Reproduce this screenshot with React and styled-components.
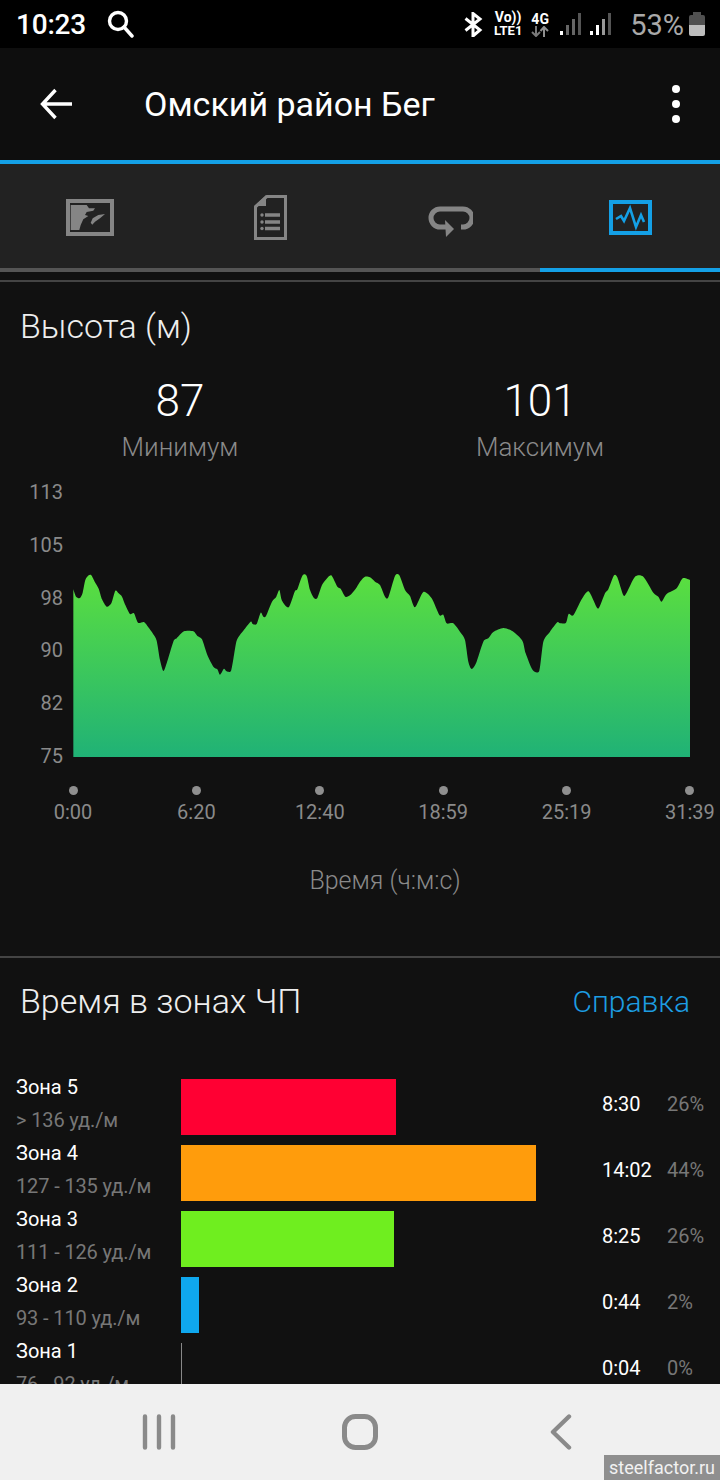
import React from "react";
import styled, { createGlobalStyle } from "styled-components";

const GlobalStyle = createGlobalStyle`
  html, body {
    margin: 0;
    padding: 0;
    background: #111;
  }
  * {
    box-sizing: border-box;
  }
`;

const Screen = styled.div`
  position: relative;
  width: 720px;
  height: 1480px;
  display: flex;
  flex-direction: column;
  overflow: hidden;
  background: #111;
  font-family: Roboto, "Noto Sans", sans-serif;
  color: #fff;
`;

const StatusBar = styled.div`
  flex: none;
  height: 48px;
  background: #000;
  display: flex;
  align-items: center;
  padding: 0 15px 0 16px;
`;

const Clock = styled.div`
  font-size: 28px;
  font-weight: 500;
  letter-spacing: -0.2px;
  width: 91px;
`;

const StatusRight = styled.div`
  margin-left: auto;
  display: flex;
  align-items: center;
`;

const NetBlock = styled.div`
  display: flex;
  flex-direction: column;
  align-items: center;
  font-weight: 700;
  margin-left: ${(p) => p.$gap}px;
  width: ${(p) => p.$width}px;
`;

const NetLine = styled.span`
  font-size: ${(p) => p.$size}px;
  line-height: ${(p) => p.$line}px;
  white-space: nowrap;
`;

const Signal = styled.div`
  display: flex;
  align-items: flex-end;
  gap: 3px;
  height: 22px;
  margin-left: ${(p) => p.$gap}px;
`;

const SignalBar = styled.i`
  display: block;
  width: 3px;
  height: ${(p) => p.$h}px;
  background: ${(p) => p.$c};
`;

const BatteryText = styled.div`
  font-size: 29px;
  color: #a9a9a9;
  margin: 2px 0 0 19px;
`;

const Battery = styled.div`
  position: relative;
  width: 16px;
  height: 21px;
  margin: 3px 0 0 5px;
  border-radius: 2px;
  background: linear-gradient(#505050 0 48%, #bdbdbd 48%);

  &::before {
    content: "";
    position: absolute;
    top: -3px;
    left: 4px;
    width: 8px;
    height: 3px;
    background: #505050;
  }
`;

const AppBar = styled.div`
  flex: none;
  height: 112px;
  background: #0e0e0e;
  display: flex;
  align-items: center;
  padding: 0 40px 0 40px;
`;

const Title = styled.div`
  font-size: 34px;
  margin-left: 72px;
  flex: 1;
`;

const Dots = styled.div`
  display: flex;
  flex-direction: column;
  gap: 7px;
`;

const Dot = styled.i`
  display: block;
  width: 8px;
  height: 8px;
  border-radius: 50%;
  background: #fff;
`;

const Tabs = styled.div`
  flex: none;
  display: grid;
  grid-template-columns: repeat(4, 1fr);
  border-top: 4px solid #14a0e6;
  background: #222;
`;

const Tab = styled.div`
  height: 108px;
  display: flex;
  align-items: center;
  justify-content: center;
  padding-top: 2px;
  border-bottom: 4px solid ${(p) => (p.$active ? "#14a0e6" : "#555")};
`;

const LoopIcon = styled.svg`
  margin-top: 8px;
`;

const Content = styled.div`
  flex: 1;
  min-height: 0;
  overflow: hidden;
`;

const Section = styled.section`
  border-top: 2px solid #444;
  margin-top: ${(p) => p.$top}px;
`;

const SectionHead = styled.div`
  display: flex;
  justify-content: space-between;
  align-items: center;
  padding: 0 30px 0 20px;
  height: ${(p) => p.$height}px;
`;

const SectionTitle = styled.div`
  font-size: 34px;
  color: #eee;
  font-weight: 300;
`;

const HelpLink = styled.a`
  font-size: 30px;
  font-weight: 300;
  color: #1d9de2;
`;

const Stats = styled.div`
  display: grid;
  grid-template-columns: 1fr 1fr;
  margin-top: 4px;
`;

const Stat = styled.div`
  text-align: center;
`;

const StatValue = styled.div`
  font-size: 44px;
  font-weight: 300;
  line-height: 54px;
`;

const StatLabel = styled.div`
  font-size: 26px;
  font-weight: 300;
  line-height: 38px;
  color: #8a8a8a;
`;

const ChartRow = styled.div`
  display: flex;
  margin-top: 14px;
  height: 288px;
`;

const YAxis = styled.div`
  width: 63px;
  display: flex;
  flex-direction: column;
  justify-content: space-between;
  align-items: flex-end;
`;

const AxisText = styled.span`
  font-size: 20px;
  line-height: 24px;
  color: #8a8a8a;
`;

const Plot = styled.div`
  margin: 90px 0 0 10px;
  width: 617px;
  height: 187px;
`;

const XAxis = styled.div`
  display: flex;
  justify-content: space-between;
  margin: 18px 30px 0 73px;
`;

const Tick = styled.div`
  width: 0;
  display: flex;
  flex-direction: column;
  align-items: center;
  gap: 5px;
  white-space: nowrap;
`;

const TickDot = styled.i`
  display: block;
  flex: none;
  width: 9px;
  height: 9px;
  border-radius: 50%;
  background: #8f8f8f;
`;

const AxisTitle = styled.div`
  text-align: center;
  font-size: 25px;
  font-weight: 300;
  color: #8a8a8a;
  line-height: 30px;
  margin: 42px 0 60px 50px;
`;

const Zones = styled.div`
  margin-top: 29px;
`;

const ZoneRow = styled.div`
  display: grid;
  grid-template-columns: 165px 421px 65px 1fr;
  height: 66px;
  padding-left: 16px;
`;

const ZoneName = styled.div`
  font-size: 20px;
  line-height: 28px;
  color: #fff;
`;

const ZoneRange = styled.div`
  font-size: 20px;
  line-height: 28px;
  margin-top: 5px;
  letter-spacing: -0.13px;
  color: #777;
  white-space: nowrap;
`;

const ZoneBar = styled.div`
  margin-top: 6px;
  height: 56px;
  width: ${(p) => p.$width}px;
  background: ${(p) => p.$color};
`;

const ZoneTime = styled.div`
  padding-top: 17px;
  font-size: 20px;
  line-height: 28px;
`;

const ZonePct = styled(ZoneTime)`
  color: #777;
`;

const NavBar = styled.div`
  flex: none;
  height: 96px;
  background: #f0f0f0;
  display: grid;
  grid-template-columns: repeat(3, 201px);
  justify-content: center;
  align-items: center;
  justify-items: center;
`;

const Watermark = styled.div`
  position: absolute;
  right: 0;
  bottom: 0;
  width: 116px;
  height: 25px;
  background: #8f8f8f;
  color: #f2f2f2;
  font-size: 18px;
  line-height: 25px;
  text-align: center;
`;

const RAW = [
  [220, 358], [228, 380], [240, 384], [248, 368], [256, 330], [266, 316], [274, 316], [284, 335], [296, 356],
  [306, 388], [320, 410], [334, 400], [346, 362], [356, 370], [366, 380], [376, 405], [390, 432], [402, 430],
  [414, 458], [432, 456], [445, 472], [458, 490], [470, 512], [480, 570], [490, 603], [500, 580], [520, 515],
  [530, 505], [552, 484], [580, 484], [592, 498], [606, 508], [622, 555], [640, 590], [652, 598], [660, 614],
  [672, 596], [680, 604], [694, 600], [708, 520], [716, 500], [730, 482], [752, 455], [758, 462], [770, 462],
  [782, 428], [790, 440], [798, 438], [816, 395], [828, 382], [838, 360], [846, 392], [866, 412], [884, 365],
  [892, 358], [908, 316], [920, 318], [930, 360], [942, 384], [952, 384], [966, 345], [980, 326], [994, 316],
  [1012, 350], [1022, 356], [1036, 380], [1050, 376], [1066, 358], [1080, 335], [1095, 320], [1110, 322],
  [1125, 335], [1140, 345], [1155, 380], [1165, 382], [1185, 318], [1198, 316], [1215, 360], [1230, 378],
  [1245, 412], [1270, 366], [1295, 385], [1318, 435], [1330, 434], [1340, 460], [1360, 460], [1382, 488],
  [1395, 510], [1405, 575], [1415, 597], [1428, 580], [1450, 515], [1465, 505], [1480, 486], [1510, 474],
  [1538, 484], [1567, 512], [1577, 550], [1598, 600], [1618, 602], [1630, 515], [1650, 485], [1672, 457],
  [1680, 460], [1698, 458], [1706, 432], [1720, 436], [1745, 388], [1766, 364], [1790, 412], [1798, 412],
  [1815, 370], [1825, 358], [1842, 316], [1852, 322], [1870, 376], [1880, 368], [1905, 320], [1930, 320],
  [1960, 368], [1975, 380], [1985, 395], [2000, 372], [2030, 355], [2048, 325], [2070, 330],
];

// soft curve through the sampled points
const smoothPath = (pts) => {
  let d = "";
  for (let i = 0; i < pts.length - 1; i++) {
    const p0 = pts[Math.max(i - 1, 0)];
    const p1 = pts[i];
    const p2 = pts[i + 1];
    const p3 = pts[Math.min(i + 2, pts.length - 1)];
    const c1x = p1[0] + (p2[0] - p0[0]) / 8;
    const c1y = p1[1] + (p2[1] - p0[1]) / 8;
    const c2x = p2[0] - (p3[0] - p1[0]) / 8;
    const c2y = p2[1] - (p3[1] - p1[1]) / 8;
    d += `C${c1x} ${c1y} ${c2x} ${c2y} ${p2[0]} ${p2[1]} `;
  }
  return d;
};

const AREA = `M220 861 L220 358 ${smoothPath(RAW)} L2070 861 Z`;

const Y_LABELS = ["113", "105", "98", "90", "82", "75"];
const X_LABELS = ["0:00", "6:20", "12:40", "18:59", "25:19", "31:39"];

const ZONES = [
  { name: "Зона 5", range: "> 136 уд./м", width: 215, color: "#ff0033", time: "8:30", pct: "26%" },
  { name: "Зона 4", range: "127 - 135 уд./м", width: 355, color: "#ff9c0c", time: "14:02", pct: "44%" },
  { name: "Зона 3", range: "111 - 126 уд./м", width: 213, color: "#6fee1f", time: "8:25", pct: "26%" },
  { name: "Зона 2", range: "93 - 110 уд./м", width: 18, color: "#0fa7ee", time: "0:44", pct: "2%" },
  { name: "Зона 1", range: "76 - 92 уд./м", width: 1, color: "#888", time: "0:04", pct: "0%" },
];

const GRAY = "#858585";
const BLUE = "#14a0e6";

const App = () => (
  <Screen>
    <GlobalStyle />
    <StatusBar>
      <Clock>10:23</Clock>
      <svg width="27" height="28" viewBox="0 0 27 28" fill="none" stroke="#fff" strokeWidth="3.4">
        <circle cx="11" cy="11" r="8.5" />
        <path d="M17 17 L25 26" strokeLinecap="round" />
      </svg>
      <StatusRight>
        <svg width="19" height="25" viewBox="0 0 19 25" fill="none" stroke="#fff" strokeWidth="3">
          <path d="M1.5 6.5 L16 18 L9 24 V1.5 L16 7 L1.5 18.5" />
        </svg>
        <NetBlock $gap={10} $width={30}>
          <NetLine $size={14} $line={13}>Vo))</NetLine>
          <NetLine $size={13} $line={13}>LTE1</NetLine>
        </NetBlock>
        <NetBlock $gap={8} $width={18}>
          <NetLine $size={14} $line={14}>4G</NetLine>
          <svg width="18" height="11" viewBox="0 0 18 11" fill="none" stroke="#7a7a7a" strokeWidth="2">
            <path d="M5 0 V10 M1 6 L5 10 L9 6" />
            <path d="M13 11 V1 M9.5 5 L13 1 L17 5" stroke="#8f8f8f" />
          </svg>
        </NetBlock>
        <Signal $gap={11}>
          <SignalBar $h={4} $c="#fff" />
          <SignalBar $h={10} $c="#666" />
          <SignalBar $h={16} $c="#666" />
          <SignalBar $h={22} $c="#555" />
        </Signal>
        <Signal $gap={9}>
          <SignalBar $h={4} $c="#fff" />
          <SignalBar $h={10} $c="#fff" />
          <SignalBar $h={16} $c="#999" />
          <SignalBar $h={22} $c="#555" />
        </Signal>
        <BatteryText>53%</BatteryText>
        <Battery />
      </StatusRight>
    </StatusBar>

    <AppBar>
      <svg width="32" height="32" viewBox="0 0 32 32" fill="none" stroke="#fff" strokeWidth="3.4">
        <path d="M32 16 H3 M15.5 2 L2.5 16 L15.5 30" />
      </svg>
      <Title>Омский район Бег</Title>
      <Dots>
        <Dot />
        <Dot />
        <Dot />
      </Dots>
    </AppBar>

    <Tabs>
      <Tab>
        <svg width="48" height="37" viewBox="0 0 48 37">
          <rect x="2" y="2" width="44" height="33" fill="none" stroke={GRAY} strokeWidth="4" />
          <path
            d="M4.7 6 H20.7 L23 9.300 H29 L27.300 11.700 L20.700 13 L19 16 L22.300 17 L17.300 20.300 L14.700 26 L13.300 31 H4.700 Z"
            fill={GRAY}
          />
          <path d="M24.700 23.700 L26.700 19.300 L32.300 16 L39 15 L34 19.300 L29 22.700 L26.300 25.700 Z" fill={GRAY} />
        </svg>
      </Tab>
      <Tab>
        <svg width="33" height="45" viewBox="0 0 33 45">
          <path d="M13 1.5 H31.5 V43.5 H1.5 V12 Z" fill="none" stroke={GRAY} strokeWidth="3" />
          <path d="M0 11 L12 0 V11 Z" fill={GRAY} />
          <path d="M11 20 H26 M11 27 H26 M11 33.500 H26" stroke={GRAY} strokeWidth="3.4" />
          <circle cx="8" cy="20" r="1.7" fill={GRAY} />
          <circle cx="8" cy="27" r="1.7" fill={GRAY} />
          <circle cx="8" cy="33.500" r="1.7" fill={GRAY} />
        </svg>
      </Tab>
      <Tab>
        <LoopIcon width="45" height="31" viewBox="0 0 45 31">
          <path d="M33 21 H35 A9 9 0 0 0 35 3 H12 A9 9 0 0 0 12 21 H19" fill="none" stroke={GRAY} strokeWidth="5" />
          <path d="M17 14 L26 23 L18 31 Z" fill={GRAY} />
        </LoopIcon>
      </Tab>
      <Tab $active>
        <svg width="43" height="35" viewBox="0 0 43 35" fill="none" stroke={BLUE}>
          <rect x="2" y="2" width="39" height="31" strokeWidth="4" />
          <path d="M7 19 L12 16 L15 21 L21 8 L27 27 L32 15 L35 22" strokeWidth="2.600" />
        </svg>
      </Tab>
    </Tabs>

    <Content>
      <Section $top={8}>
        <SectionHead $height={88}>
          <SectionTitle>Высота (м)</SectionTitle>
        </SectionHead>
        <Stats>
          <Stat>
            <StatValue>87</StatValue>
            <StatLabel>Минимум</StatLabel>
          </Stat>
          <Stat>
            <StatValue>101</StatValue>
            <StatLabel>Максимум</StatLabel>
          </Stat>
        </Stats>
        <ChartRow>
          <YAxis>
            {Y_LABELS.map((label) => (
              <AxisText key={label}>{label}</AxisText>
            ))}
          </YAxis>
          <Plot>
            <svg width="617" height="187" viewBox="219 300 1851 561" preserveAspectRatio="none">
              <defs>
                <linearGradient id="altFill" x1="0" y1="0" x2="0" y2="1">
                  <stop offset="0" stopColor="#5bdf3f" />
                  <stop offset="1" stopColor="#20b276" />
                </linearGradient>
              </defs>
              <path d={AREA} fill="url(#altFill)" />
            </svg>
          </Plot>
        </ChartRow>
        <XAxis>
          {X_LABELS.map((label) => (
            <Tick key={label}>
              <TickDot />
              <AxisText>{label}</AxisText>
            </Tick>
          ))}
        </XAxis>
        <AxisTitle>Время (ч:м:с)</AxisTitle>
      </Section>

      <Section $top={0}>
        <SectionHead $height={86}>
          <SectionTitle>Время в зонах ЧП</SectionTitle>
          <HelpLink>Справка</HelpLink>
        </SectionHead>
        <Zones>
          {ZONES.map((zone) => (
            <ZoneRow key={zone.name}>
              <div>
                <ZoneName>{zone.name}</ZoneName>
                <ZoneRange>{zone.range}</ZoneRange>
              </div>
              <ZoneBar $width={zone.width} $color={zone.color} />
              <ZoneTime>{zone.time}</ZoneTime>
              <ZonePct>{zone.pct}</ZonePct>
            </ZoneRow>
          ))}
        </Zones>
      </Section>
    </Content>

    <NavBar>
      <svg width="34" height="36" viewBox="0 0 34 36" fill="none" stroke="#8a8a8a" strokeWidth="4.400" strokeLinecap="round">
        <path d="M3 2.500 V33.500 M17 2.500 V33.500 M31 2.500 V33.500" />
      </svg>
      <svg width="36" height="36" viewBox="0 0 36 36" fill="none" stroke="#8a8a8a" strokeWidth="5">
        <rect x="2.500" y="2.500" width="31" height="31" rx="11" />
      </svg>
      <svg width="22" height="36" viewBox="0 0 22 36" fill="none" stroke="#8a8a8a" strokeWidth="4.400" strokeLinecap="round" strokeLinejoin="round">
        <path d="M19 2.500 L3 18 L19 33.500" />
      </svg>
    </NavBar>
    <Watermark>steelfactor.ru</Watermark>
  </Screen>
);

export default App;
